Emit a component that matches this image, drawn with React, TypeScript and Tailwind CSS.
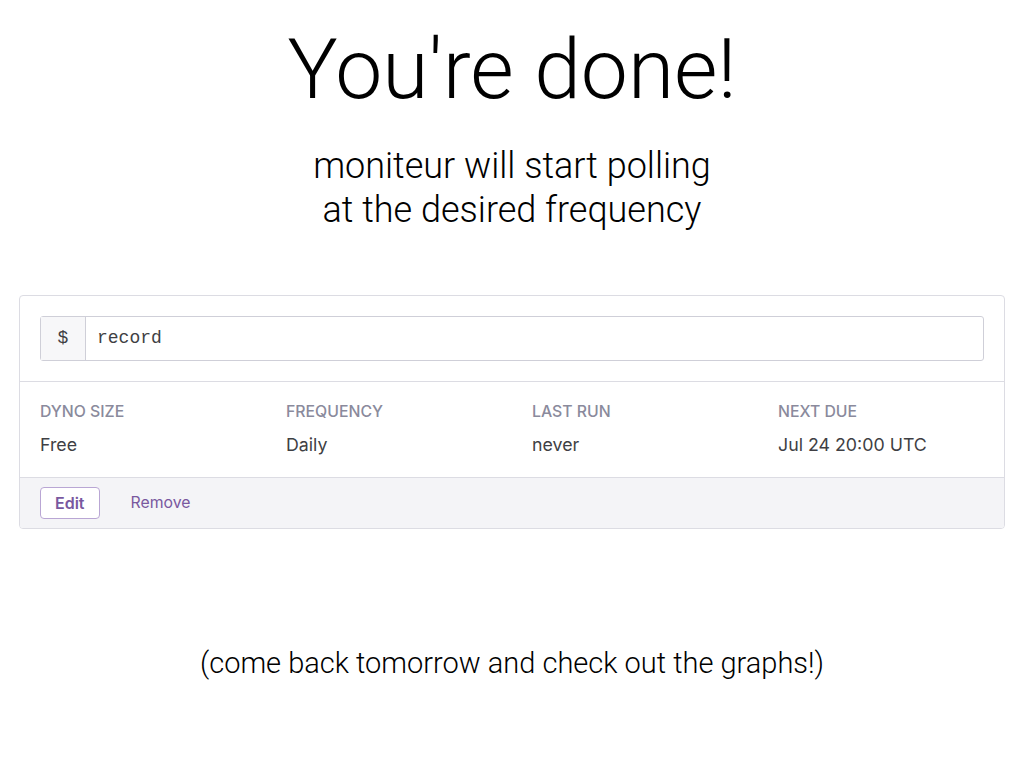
import React from "react";

const columns = [
  { label: "Dyno size", value: "Free" },
  { label: "Frequency", value: "Daily" },
  { label: "Last run", value: "never" },
  { label: "Next due", value: "Jul 24 20:00 UTC" },
];

export default function App() {
  return (
    <div className="flex h-[768px] w-[1024px] flex-col items-center bg-white font-['Roboto',sans-serif] text-black">
      <h1 className="mt-[22px] text-[84px] font-light leading-[96px]">You're done!</h1>

      <p className="mt-[26px] text-center text-[36px] font-light leading-[44px]">
        moniteur will start polling
        <br />
        at the desired frequency
      </p>

      <div className="mt-[63px] w-[986px] overflow-hidden rounded-[4px] border border-[#dcdce3] font-['Inter',sans-serif]">
        <div className="border-b border-[#dcdce3] px-[20px] py-[20px]">
          <div className="flex h-[45px] rounded-[3px] border border-[#cfcfd8]">
            <span className="flex w-[45px] items-center justify-center border-r border-[#cfcfd8] bg-[#f7f7f9] font-['Liberation_Mono',monospace] text-[18px] text-[#3f3f44]">
              $
            </span>
            <span className="flex items-center pl-[11px] font-['Liberation_Mono',monospace] text-[18px] text-[#3f3f44]">
              record
            </span>
          </div>
        </div>

        <div className="grid grid-cols-4 gap-x-[40px] px-[20px] pb-[21px] pt-[20px]">
          {columns.map((col) => (
            <div key={col.label} className="flex flex-col">
              <span className="text-[15.8px] font-medium uppercase leading-[20px] text-[#8a8a9c]">{col.label}</span>
              <span className="mt-[12px] text-[17.8px] leading-[22px] text-[#3f3f44]">{col.value}</span>
            </div>
          ))}
        </div>

        <div className="flex items-center gap-[31px] border-t border-[#dcdce3] bg-[#f4f4f7] px-[20px] py-[9px]">
          <button className="h-[32px] rounded-[4px] border border-[#b9a6d4] bg-white px-[14px] text-[16px] font-semibold text-[#79589f]">
            Edit
          </button>
          <span className="text-[15.8px] text-[#79589f]">Remove</span>
        </div>
      </div>

      <p className="mt-[118px] text-[29px] font-light leading-[32px]">(come back tomorrow and check out the graphs!)</p>
    </div>
  );
}
